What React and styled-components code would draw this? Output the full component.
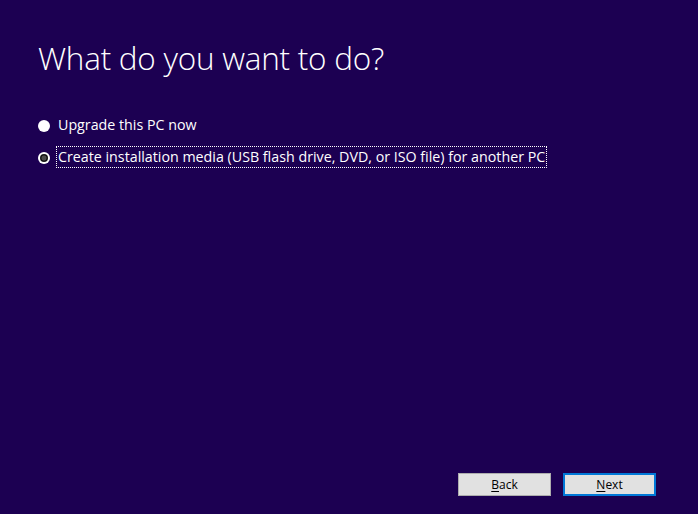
import React from "react";
import styled, { createGlobalStyle } from "styled-components";

const Global = createGlobalStyle`
  html, body { margin: 0; padding: 0; background: #1c0052; }
  body { width: 698px; height: 514px; overflow: hidden; }
  #root { width: 698px; height: 514px; }
`;

const Page = styled.div`
  width: 698px;
  height: 514px;
  box-sizing: border-box;
  background: #1c0052;
  color: #ffffff;
  display: flex;
  flex-direction: column;
  padding: 36px 0 18px 38px;
  font-family: "Open Sans", "Noto Sans", sans-serif;
`;

const Title = styled.h1`
  margin: 0;
  font-weight: 300;
  font-size: 31.5px;
  line-height: 44px;
  letter-spacing: -0.25px;
  color: #ffffff;
`;

const Options = styled.div`
  display: flex;
  flex-direction: column;
  gap: 10px;
  margin-top: 34px;
`;

const Option = styled.label`
  display: flex;
  align-items: center;
  gap: 6px;
  height: 22px;
`;

const Radio = styled.span`
  width: 12px;
  height: 12px;
  border-radius: 50%;
  background: #ffffff;
  display: flex;
  align-items: center;
  justify-content: center;
  flex: none;
  margin-top: 1px;
  &::after {
    content: "";
    display: ${(p) => (p.$checked ? "block" : "none")};
    width: 8px;
    height: 8px;
    border-radius: 50%;
    background: radial-gradient(circle, #4a4a4a 0 2.2px, #141414 2.8px);
  }
`;

const OptionText = styled.span`
  font-family: "Open Sans", "Noto Sans", sans-serif;
  font-size: 14.25px;
  color: #ffffff;
  line-height: 20px;
  padding: 0 1px;
  border: 1px dotted ${(p) => (p.$focused ? "#ffffff" : "transparent")};
`;

const Spacer = styled.div`
  flex: 1;
`;

const Footer = styled.div`
  display: flex;
  justify-content: flex-end;
  gap: 12px;
  padding-right: 42px;
`;

const Button = styled.button`
  width: 93px;
  height: 23px;
  box-sizing: border-box;
  background: #e1e1e1;
  border: ${(p) => (p.$primary ? "2px solid #0078d7" : "1px solid #adadad")};
  color: #000000;
  font-family: "Open Sans", "Noto Sans", sans-serif;
  font-size: 12px;
  padding: 0;
  display: flex;
  align-items: center;
  justify-content: center;
  u { text-decoration: underline; text-underline-offset: 2px; }
`;

export default function App() {
  return (
    <>
      <Global />
      <Page>
        <Title>What do you want to do?</Title>
        <Options>
          <Option>
            <Radio />
            <OptionText>Upgrade this PC now</OptionText>
          </Option>
          <Option>
            <Radio $checked />
            <OptionText $focused>
              Create installation media (USB flash drive, DVD, or ISO file) for another PC
            </OptionText>
          </Option>
        </Options>
        <Spacer />
        <Footer>
          <Button>
            <u>B</u>ack
          </Button>
          <Button $primary>
            <u>N</u>ext
          </Button>
        </Footer>
      </Page>
    </>
  );
}
